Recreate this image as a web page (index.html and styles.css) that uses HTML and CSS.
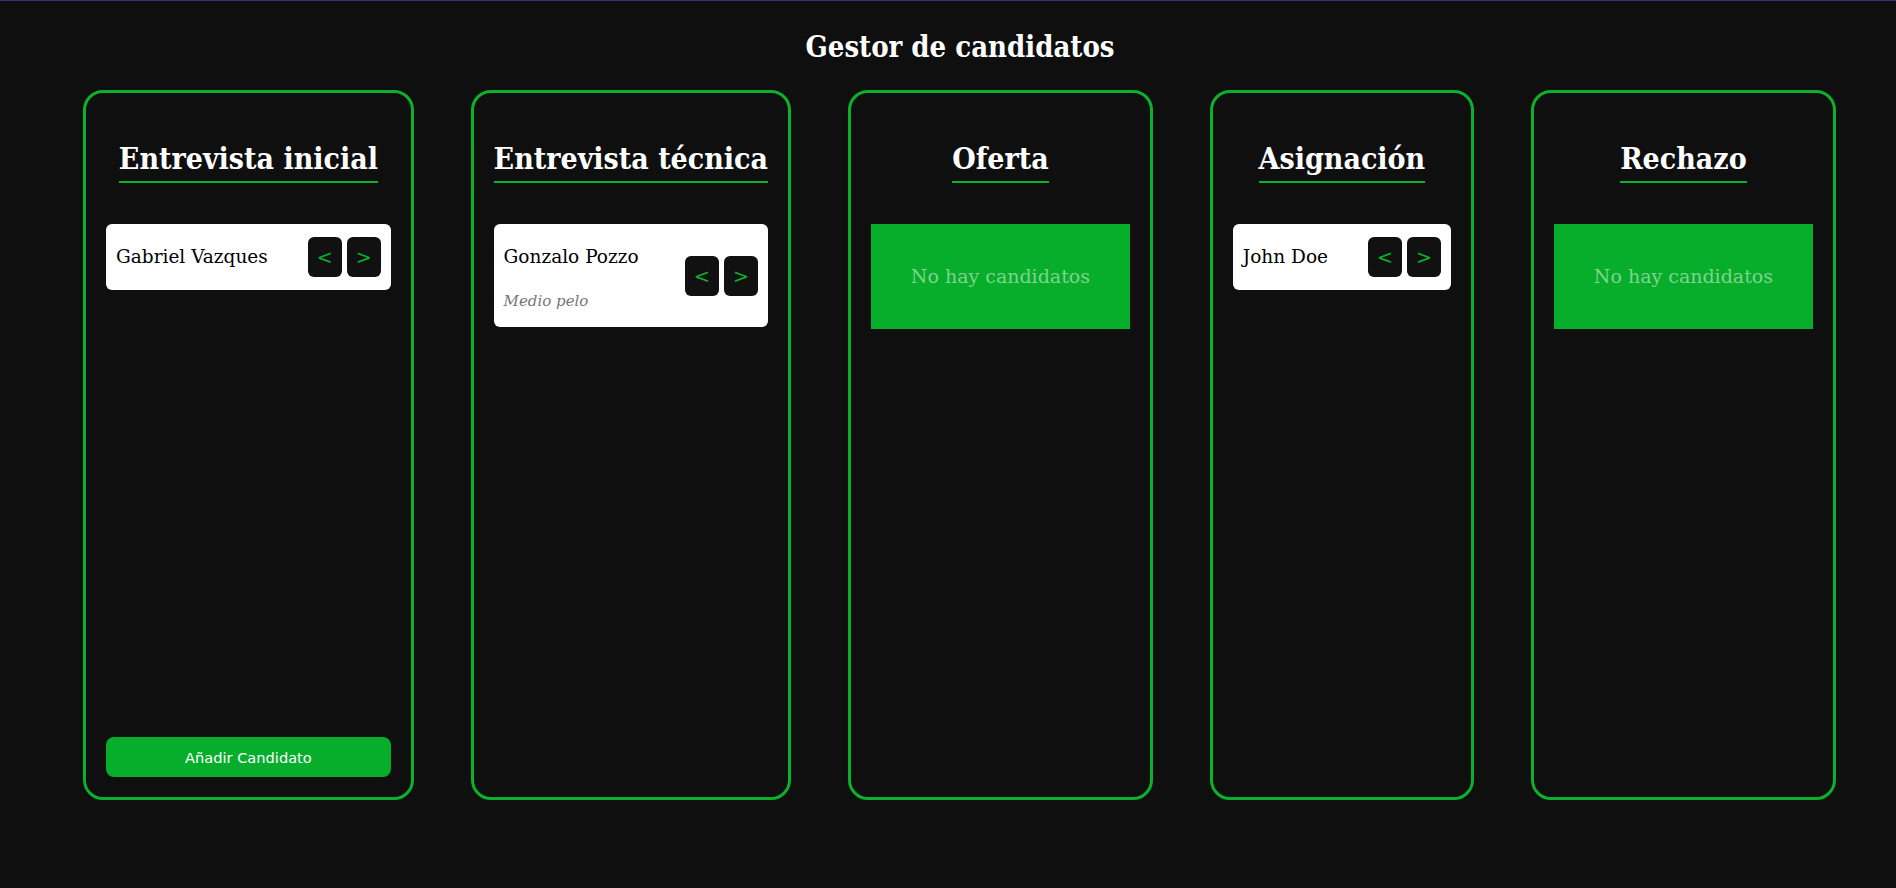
FILE: index.html
```html
<!DOCTYPE html>
<html lang="es">
<head>
<meta charset="utf-8">
<title>Gestor de candidatos</title>
<link rel="stylesheet" href="styles.css">
</head>
<body>
<h1 class="page-title">Gestor de candidatos</h1>
<main class="board">
  <section class="column">
    <h2 class="column-title"><span>Entrevista inicial</span></h2>
    <ul class="list">
      <li class="card">
        <div class="card-info">
          <p class="card-name">Gabriel Vazques</p>
        </div>
        <div class="card-actions">
          <button class="move">&lt;</button>
          <button class="move">&gt;</button>
        </div>
      </li>
    </ul>
    <button class="add">Añadir Candidato</button>
  </section>
  <section class="column">
    <h2 class="column-title"><span>Entrevista técnica</span></h2>
    <ul class="list">
      <li class="card">
        <div class="card-info">
          <p class="card-name">Gonzalo Pozzo</p>
          <p class="card-desc">Medio pelo</p>
        </div>
        <div class="card-actions">
          <button class="move">&lt;</button>
          <button class="move">&gt;</button>
        </div>
      </li>
    </ul>
  </section>
  <section class="column">
    <h2 class="column-title"><span>Oferta</span></h2>
    <p class="empty">No hay candidatos</p>
  </section>
  <section class="column">
    <h2 class="column-title"><span>Asignación</span></h2>
    <ul class="list">
      <li class="card">
        <div class="card-info">
          <p class="card-name">John Doe</p>
        </div>
        <div class="card-actions">
          <button class="move">&lt;</button>
          <button class="move">&gt;</button>
        </div>
      </li>
    </ul>
  </section>
  <section class="column">
    <h2 class="column-title"><span>Rechazo</span></h2>
    <p class="empty">No hay candidatos</p>
  </section>
</main>
</body>
</html>
```
FILE: styles.css
```css
* { box-sizing: border-box; }

html, body {
  margin: 0;
  padding: 0;
}

body {
  background: #0f0f0f;
  border-top: 1px solid #3b2c7c;
  color: #ffffff;
  font-family: "DejaVu Serif", "Liberation Serif", serif;
  height: 888px;
  padding-left: 24px;
}

.page-title {
  margin: 26px 0 23px;
  text-align: center;
  font-size: 29px;
  font-weight: bold;
  font-stretch: condensed;
  line-height: 40px;
}

.board {
  display: flex;
  justify-content: space-between;
  align-items: flex-start;
  padding: 0 60px 0 59px;
}

.column {
  height: 710px;
  border: 3px solid #0bb02d;
  border-radius: 20px;
  padding: 20px;
  display: flex;
  flex-direction: column;
}

.column-title {
  margin: 25px 0 0;
  text-align: center;
  font-size: 30px;
  font-weight: bold;
  font-stretch: condensed;
  line-height: 42px;
}

.column-title span {
  display: inline-block;
  border-bottom: 2px solid #0bb02d;
  padding-bottom: 1px;
}

.list {
  list-style: none;
  margin: 41px 0 0;
  padding: 0;
}

.card {
  background: #ffffff;
  color: #000000;
  border-radius: 6px;
  padding: 13px 10px;
  display: flex;
  align-items: center;
  justify-content: space-between;
  gap: 40px;
}

.card-name {
  margin: 0;
  font-size: 18.5px;
  line-height: 40px;
  white-space: nowrap;
}

.card-desc {
  margin: 14px 0 3px;
  font-size: 15px;
  line-height: 20px;
  font-style: italic;
  color: #777777;
}

.card-actions {
  display: flex;
  gap: 5px;
}

.move {
  width: 34px;
  height: 40px;
  border: none;
  border-radius: 6px;
  background: #111111;
  color: #0bb02d;
  font-family: "DejaVu Sans", sans-serif;
  font-size: 19px;
  padding: 0;
}

.empty {
  margin: 41px 0 0;
  padding: 40px;
  background: #07ae2b;
  color: #7fd48c;
  font-size: 19px;
  line-height: 25px;
  text-align: center;
  white-space: nowrap;
}

.add {
  margin-top: auto;
  height: 40px;
  border: none;
  border-radius: 8px;
  background: #07ae2b;
  color: #ffffff;
  font-family: "DejaVu Sans", sans-serif;
  font-size: 14.6px;
}
```
